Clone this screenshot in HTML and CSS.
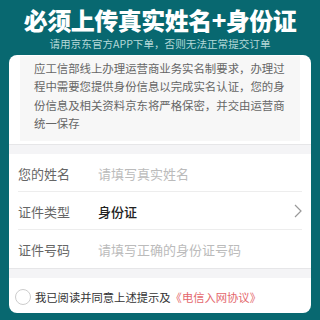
FILE: index.html
```html
<!DOCTYPE html>
<html>

<head>
  <meta charset="utf-8">
  <meta name="viewport" content="width=device-width">
  <title>实名认证</title>

  <link rel="stylesheet" href="styles.css">
</head>

<body>
  <div class="header">
    <div class="title">必须上传真实姓名+身份证</div>
    <div class="subtitle">请用京东官方APP下单，否则无法正常提交订单</div>
  </div>

  <div class="card">
    <div class="notice">应工信部线上办理运营商业务实名制要求，办理过程中需要您提供身份信息以完成实名认证，您的身份信息及相关资料京东将严格保密，并交由运营商统一保存</div>

    <div class="band"></div>

    <div class="form">
      <div class="row">
        <div class="label">您的姓名</div>
        <div class="placeholder">请填写真实姓名</div>
      </div>
      <div class="row">
        <div class="label">证件类型</div>
        <div class="value">身份证</div>
        <svg class="chevron" width="8" height="14" viewBox="0 0 8 14">
          <path d="M1 1 L7 7 L1 13" fill="none" stroke="#999" stroke-width="1.2" />
        </svg>
      </div>
      <div class="row">
        <div class="label">证件号码</div>
        <div class="placeholder">请填写正确的身份证号码</div>
      </div>
    </div>

    <div class="band"></div>

    <div class="agree">
      <span class="radio"></span>
      <span class="agree-text">我已阅读并同意上述提示及<span class="link">《电信入网协议》</span></span>
    </div>
  </div>
</body>

</html>
```

FILE: styles.css
```css
html,
body {
  margin: 0;
  padding: 0;
  width: 100%;
  height: 100%;
  overflow: hidden;
}

body {
  background-color: #086870;
  font-family: "Noto Sans CJK SC", "Noto Sans", sans-serif;
}

.header {
  padding-top: 8px;
  text-align: center;
}

.title {
  color: #fff;
  font-size: 24px;
  line-height: 24px;
  font-weight: 900;
  letter-spacing: -0.5px;
}

.subtitle {
  margin-top: 5px;
  color: #b4d8d8;
  font-size: 10.6px;
  line-height: 14px;
}

.card {
  margin: 4px 9px 0;
  background-color: #fff;
  border-radius: 8px;
  overflow: hidden;
}

.notice {
  margin: 1px 11px 0;
  padding: 3px 14px 9px;
  background-color: #f7f7f7;
  color: #666;
  font-size: 11.4px;
  line-height: 18.3px;
}

.band {
  margin-top: 3px;
  height: 9px;
  background-color: #f4f4f6;
  border-top: 1px solid #e6e6e8;
}

.form {
  padding: 0 9px;
}

.row {
  display: flex;
  align-items: center;
  height: 36px;
  padding-top: 1px;
  border-bottom: 1px solid #ededed;
  font-size: 13px;
}

.row:last-child {
  border-bottom: none;
  height: 37px;
}

.label {
  width: 80px;
  color: #666;
}

.placeholder {
  color: #bbb;
}

.value {
  flex: 1;
  color: #222;
  font-weight: 500;
}

.form + .band {
  margin-top: 0;
}

.agree {
  display: flex;
  align-items: center;
  height: 33px;
  padding-left: 6px;
  padding-top: 2px;
}

.radio {
  width: 14px;
  height: 14px;
  border: 1px solid #ccc;
  border-radius: 50%;
  margin-right: 4px;
}

.agree-text {
  color: #333;
  font-size: 11.3px;
}

.link {
  color: #e4676c;
}
```
